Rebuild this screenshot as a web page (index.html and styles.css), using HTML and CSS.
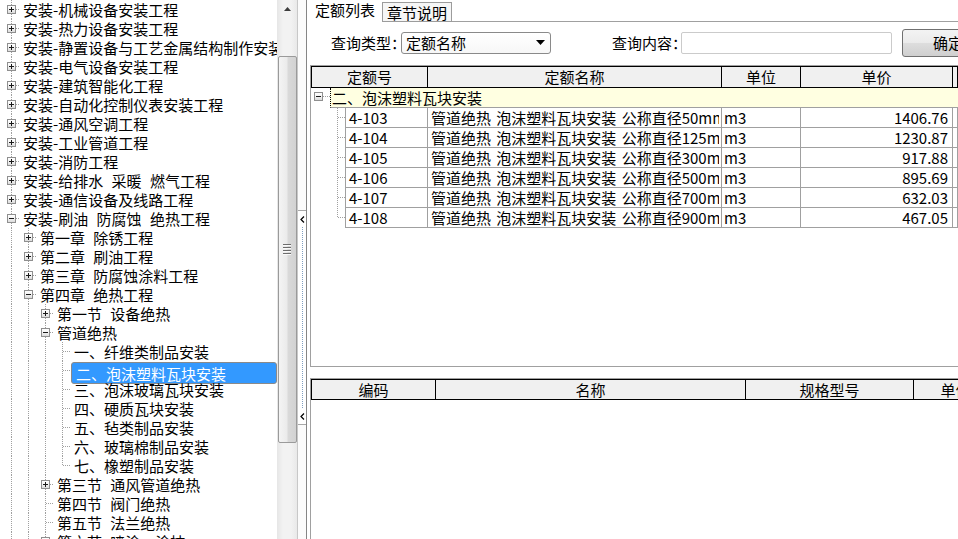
FILE: index.html
```html
<!DOCTYPE html>
<html lang="zh-CN">
<head>
<meta charset="utf-8">
<title>定额列表</title>
<link rel="stylesheet" href="styles.css">
</head>
<body>
<div class="left">
  <div class="tree">
    <div class="trow"><span class="g t"><i class="box plus"></i></span><span class="lbl">安装-机械设备安装工程</span></div>
    <div class="trow"><span class="g t"><i class="box plus"></i></span><span class="lbl">安装-热力设备安装工程</span></div>
    <div class="trow"><span class="g t"><i class="box plus"></i></span><span class="lbl">安装-静置设备与工艺金属结构制作安装工程</span></div>
    <div class="trow"><span class="g t"><i class="box plus"></i></span><span class="lbl">安装-电气设备安装工程</span></div>
    <div class="trow"><span class="g t"><i class="box plus"></i></span><span class="lbl">安装-建筑智能化工程</span></div>
    <div class="trow"><span class="g t"><i class="box plus"></i></span><span class="lbl">安装-自动化控制仪表安装工程</span></div>
    <div class="trow"><span class="g t"><i class="box plus"></i></span><span class="lbl">安装-通风空调工程</span></div>
    <div class="trow"><span class="g t"><i class="box plus"></i></span><span class="lbl">安装-工业管道工程</span></div>
    <div class="trow"><span class="g t"><i class="box plus"></i></span><span class="lbl">安装-消防工程</span></div>
    <div class="trow"><span class="g t"><i class="box plus"></i></span><span class="lbl">安装-给排水 采暖 燃气工程</span></div>
    <div class="trow"><span class="g t"><i class="box plus"></i></span><span class="lbl">安装-通信设备及线路工程</span></div>
    <div class="trow"><span class="g t"><i class="box"></i></span><span class="lbl">安装-刷油 防腐蚀 绝热工程</span></div>
    <div class="trow"><span class="g v"></span><span class="g t"><i class="box plus"></i></span><span class="lbl">第一章 除锈工程</span></div>
    <div class="trow"><span class="g v"></span><span class="g t"><i class="box plus"></i></span><span class="lbl">第二章 刷油工程</span></div>
    <div class="trow"><span class="g v"></span><span class="g t"><i class="box plus"></i></span><span class="lbl">第三章 防腐蚀涂料工程</span></div>
    <div class="trow"><span class="g v"></span><span class="g t"><i class="box"></i></span><span class="lbl">第四章 绝热工程</span></div>
    <div class="trow"><span class="g v"></span><span class="g v"></span><span class="g t"><i class="box plus"></i></span><span class="lbl">第一节 设备绝热</span></div>
    <div class="trow"><span class="g v"></span><span class="g v"></span><span class="g t"><i class="box"></i></span><span class="lbl">管道绝热</span></div>
    <div class="trow"><span class="g v"></span><span class="g v"></span><span class="g v"></span><span class="g t"></span><span class="lbl">一、纤维类制品安装</span></div>
    <div class="trow"><span class="g v"></span><span class="g v"></span><span class="g v"></span><span class="g t"></span><span class="lbl sel">二、泡沫塑料瓦块安装</span></div>
    <div class="trow"><span class="g v"></span><span class="g v"></span><span class="g v"></span><span class="g t"></span><span class="lbl">三、泡沫玻璃瓦块安装</span></div>
    <div class="trow"><span class="g v"></span><span class="g v"></span><span class="g v"></span><span class="g t"></span><span class="lbl">四、硬质瓦块安装</span></div>
    <div class="trow"><span class="g v"></span><span class="g v"></span><span class="g v"></span><span class="g t"></span><span class="lbl">五、毡类制品安装</span></div>
    <div class="trow"><span class="g v"></span><span class="g v"></span><span class="g v"></span><span class="g t"></span><span class="lbl">六、玻璃棉制品安装</span></div>
    <div class="trow"><span class="g v"></span><span class="g v"></span><span class="g v"></span><span class="g l"></span><span class="lbl">七、橡塑制品安装</span></div>
    <div class="trow"><span class="g v"></span><span class="g v"></span><span class="g t"><i class="box plus"></i></span><span class="lbl">第三节 通风管道绝热</span></div>
    <div class="trow"><span class="g v"></span><span class="g v"></span><span class="g t"></span><span class="lbl">第四节 阀门绝热</span></div>
    <div class="trow"><span class="g v"></span><span class="g v"></span><span class="g t"></span><span class="lbl">第五节 法兰绝热</span></div>
    <div class="trow"><span class="g v"></span><span class="g v"></span><span class="g t"><i class="box plus"></i></span><span class="lbl">第六节 喷涂、涂抹</span></div>
  </div>
  <div class="vs">
    <div class="vs-up"><svg width="7" height="4" viewBox="0 0 7 4"><path d="M0 4L3.5 0L7 4Z" fill="#3c3c3c"/></svg></div>
    <div class="thumb"><div class="grip"><i></i><i></i><i></i><i></i></div></div>
  </div>
</div>

<div class="split">
  <div class="split-btn">
    <svg width="5" height="7" viewBox="0 0 5 7"><path d="M4 0.5L1 3.5L4 6.5" stroke="#000" stroke-width="1.2" fill="none"/></svg>
    <div class="split-dots"></div>
    <svg width="5" height="7" viewBox="0 0 5 7"><path d="M4 0.5L1 3.5L4 6.5" stroke="#000" stroke-width="1.2" fill="none"/></svg>
  </div>
</div>

<div class="right">
  <div class="tabs">
    <div class="tab on">定额列表</div>
    <div class="tab">章节说明</div>
    <div class="tab-rest"></div>
  </div>

  <div class="query">
    <span class="ql">查询类型：</span>
    <div class="sel"><span>定额名称</span><svg width="9" height="5" viewBox="0 0 9 5"><path d="M0 0H9L4.5 5Z" fill="#000"/></svg></div>
    <span class="ql ql2">查询内容：</span>
    <div class="inp"></div>
    <div class="btn">确定</div>
  </div>

  <div class="grid1">
    <div class="hd">
      <div class="h1">定额号</div>
      <div class="h2">定额名称</div>
      <div class="h3">单位</div>
      <div class="h4">单价</div>
      <div class="h5"></div>
    </div>
    <div class="gr"><span class="gx"><i class="box"></i></span><span class="gl">二、泡沫塑料瓦块安装</span></div>
    <div class="dr"><span class="dg"></span><span class="d1">4-103</span><span class="d2"><span class="clip">管道绝热 泡沫塑料瓦块安装 公称直径50mm</span></span><span class="d3">m3</span><span class="d4">1406.76</span><span class="d5"></span></div>
    <div class="dr"><span class="dg"></span><span class="d1">4-104</span><span class="d2"><span class="clip">管道绝热 泡沫塑料瓦块安装 公称直径125mm</span></span><span class="d3">m3</span><span class="d4">1230.87</span><span class="d5"></span></div>
    <div class="dr"><span class="dg"></span><span class="d1">4-105</span><span class="d2"><span class="clip">管道绝热 泡沫塑料瓦块安装 公称直径300mm</span></span><span class="d3">m3</span><span class="d4">917.88</span><span class="d5"></span></div>
    <div class="dr"><span class="dg"></span><span class="d1">4-106</span><span class="d2"><span class="clip">管道绝热 泡沫塑料瓦块安装 公称直径500mm</span></span><span class="d3">m3</span><span class="d4">895.69</span><span class="d5"></span></div>
    <div class="dr"><span class="dg"></span><span class="d1">4-107</span><span class="d2"><span class="clip">管道绝热 泡沫塑料瓦块安装 公称直径700mm</span></span><span class="d3">m3</span><span class="d4">632.03</span><span class="d5"></span></div>
    <div class="dr last"><span class="dg"></span><span class="d1">4-108</span><span class="d2"><span class="clip">管道绝热 泡沫塑料瓦块安装 公称直径900mm</span></span><span class="d3">m3</span><span class="d4">467.05</span><span class="d5"></span></div>
  </div>

  <div class="grid2">
    <div class="hd hd2">
      <div class="k1">编码</div>
      <div class="k2">名称</div>
      <div class="k3">规格型号</div>
      <div class="k4">单位</div>
    </div>
  </div>
</div>
</body>
</html>
```

FILE: styles.css
```css
* { box-sizing: border-box; margin: 0; padding: 0; }
html, body { width: 958px; height: 539px; overflow: hidden; background: #fff; }
body {
  display: flex;
  font-family: "Noto Sans CJK SC", "Noto Sans", sans-serif;
  font-size: 15px;
  color: #000;
}

/* ---------- left tree ---------- */
.left { width: 298px; flex: none; display: flex; height: 539px; }
.tree { width: 277px; flex: none; overflow: hidden; padding-left: 3px; background: #fff; }
.trow { display: flex; height: 19px; line-height: 19px; white-space: nowrap; word-spacing: 5px; }
.g { width: 17px; flex: none; position: relative; }
.g.v::before, .g.t::before, .g.l::before {
  content: ""; position: absolute; left: 8px; top: 0; width: 1px; height: 19px;
  background: linear-gradient(#a0a0a0 50%, transparent 50%) 0 0 / 1px 2px;
}
.g.l::before { height: 10px; }
.g.t::after, .g.l::after {
  content: ""; position: absolute; left: 9px; right: 0; top: 9px; height: 1px;
  background: linear-gradient(to right, #a0a0a0 50%, transparent 50%) 0 0 / 2px 1px;
}
.box {
  position: absolute; left: 4px; top: 5px; width: 9px; height: 9px; z-index: 1;
  border: 1px solid #8f8f8f;
  background: linear-gradient(#ffffff, #f2f2f2 50%, #dcdcdc);
}
.box::before { content: ""; position: absolute; left: 1px; top: 3px; width: 5px; height: 1px; background: #1a1a1a; }
.box.plus::after { content: ""; position: absolute; left: 3px; top: 1px; width: 1px; height: 5px; background: #1a1a1a; }
.lbl { padding: 0 2px 0 3px; }
.lbl.sel { flex: 1; background: #3399ff; color: #fff; margin: 1px 0; line-height: 17px; }

/* ---------- vertical scrollbar ---------- */
.vs {
  width: 21px; flex: none; display: flex; flex-direction: column; align-items: center;
  background: linear-gradient(to right, #e6e6e6, #f2f2f2 30%, #f2f2f2 70%, #e9e9e9);
  border-right: 1px solid #c8c8c8;
}
.vs-up { height: 18px; width: 100%; display: flex; align-items: center; justify-content: center; }
.thumb {
  margin-top: 38px; width: 19px; height: 387px;
  border: 1px solid #9a9a9a; border-radius: 2px;
  background: linear-gradient(to right, #f4f4f4, #ebebeb 45%, #d9d9d9 55%, #d2d2d2);
  display: flex; align-items: center; justify-content: center;
}
.grip { display: flex; flex-direction: column; gap: 1px; }
.grip i { display: block; width: 8px; height: 2px; background: #6e6e6e; border-bottom: 1px solid #fafafa; }

/* ---------- splitter ---------- */
.split {
  width: 9px; flex: none; background: #fbfbfb;
  border-right: 1px solid #858585;
  display: flex; flex-direction: column;
}
.split-btn {
  margin-top: 210px; height: 215px;
  border-top: 1px solid #a8a8a8; border-bottom: 1px solid #a8a8a8;
  background: #fff;
  display: flex; flex-direction: column; align-items: center; padding: 5px 0 4px 1px;
}
.split-dots {
  flex: 1; width: 1px; margin: 4px 0;
  background: linear-gradient(#7f9fc0 50%, transparent 50%) 0 0 / 1px 2px;
}

/* ---------- right panel ---------- */
.right { flex: 1; min-width: 0; display: flex; flex-direction: column; overflow: hidden; }

.tabs { display: flex; height: 22px; flex: none; }
.tab { flex: none; line-height: 19px; white-space: nowrap; }
.tab.on { width: 75px; padding-left: 8px; }
.tab:not(.on) {
  margin-top: 2px; height: 20px; padding: 0 4px;
  border: 1px solid #9c9c9c; background: #f6f6f6;
}
.tab-rest { flex: 1; border-bottom: 1px solid #a0a0a0; }

.query { display: flex; align-items: center; height: 41px; flex: none; padding-left: 24px; white-space: nowrap; }
.ql { flex: none; width: 70px; }
.ql2 { margin-left: 61px; width: 69px; }
.sel {
  flex: none; width: 150px; height: 22px;
  border: 1px solid #8a8a8a; border-radius: 3px;
  background: linear-gradient(#ffffff, #f7f7f7);
  display: flex; align-items: center; justify-content: space-between;
  padding: 0 5px 0 4px; line-height: 20px;
}
.inp { flex: none; width: 211px; height: 22px; border: 1px solid #cbcbcb; border-radius: 2px; background: #fff; }
.btn {
  flex: none; margin-left: 10px; width: 92px; height: 28px;
  border: 1px solid #707070; border-radius: 3px;
  background: linear-gradient(#f3f3f3, #ebebeb 48%, #dddddd 52%, #cfcfcf);
  text-align: center; line-height: 26px;
}

/* ---------- grids ---------- */
.grid1 {
  flex: none; margin: 2px 0 0 3px; height: 302px;
  border: 1px solid #a0a0a0; border-right: none; overflow: hidden;
}
.hd {
  display: flex; height: 22px; background: #f0f0f0;
  border-top: 1px solid #000; border-bottom: 1px solid #000; border-left: 1px solid #000;
  white-space: nowrap;
}
.hd > div { flex: none; border-right: 1px solid #000; text-align: center; line-height: 20px; }
.h1 { width: 116px; }
.h2 { width: 294px; }
.h3 { width: 79px; }
.h4 { width: 152px; }
.hd > .h5 { flex: 1; }

.gr { display: flex; height: 20px; line-height: 19px; }
.gx { width: 19px; flex: none; position: relative; }
.gx .box { left: 3px; top: 4px; }
.gx::after {
  content: ""; position: absolute; left: 12px; right: 0; top: 8px; height: 1px;
  background: linear-gradient(to right, #a0a0a0 50%, transparent 50%) 0 0 / 2px 1px;
}
.gl {
  flex: 1; background: #ffffe1; white-space: nowrap;
  border-left: 1px dotted #000; border-bottom: 1px solid #a0a0a0; padding-left: 1px;
}

.dr { display: flex; height: 20px; line-height: 19px; white-space: nowrap; word-spacing: 2px; }
.dr > span { flex: none; overflow: hidden; border-bottom: 1px solid #a0a0a0; border-right: 1px solid #a0a0a0; }
.dr > .dg { width: 34px; position: relative; border: none; overflow: visible; }
.dg::before {
  content: ""; position: absolute; left: 26px; top: 0; width: 1px; height: 20px;
  background: linear-gradient(#a0a0a0 50%, transparent 50%) 0 0 / 1px 2px;
}
.last .dg::before { height: 10px; }
.dg::after {
  content: ""; position: absolute; left: 27px; right: 0; top: 9px; height: 1px;
  background: linear-gradient(to right, #a0a0a0 50%, transparent 50%) 0 0 / 2px 1px;
}
.d1 { width: 83px; border-left: 1px solid #a0a0a0; padding-left: 3px; }
.d2 { width: 294px; padding-left: 3px; }
.d2 .clip { display: block; width: 288px; overflow: hidden; }
.d3 { width: 79px; padding-left: 2px; }
.d4 { width: 152px; text-align: right; padding-right: 4px; }
.dr > .d5 { flex: 1; }

.grid2 {
  flex: 1; margin: 11px 0 0 3px;
  border-top: 1px solid #a0a0a0; border-left: 1px solid #a0a0a0;
}
.hd2 { height: 21px; }
.hd2 > div { line-height: 19px; }
.k1 { width: 124px; }
.k2 { width: 310px; }
.k3 { width: 168px; }
.k4 { width: 84px; }
```
